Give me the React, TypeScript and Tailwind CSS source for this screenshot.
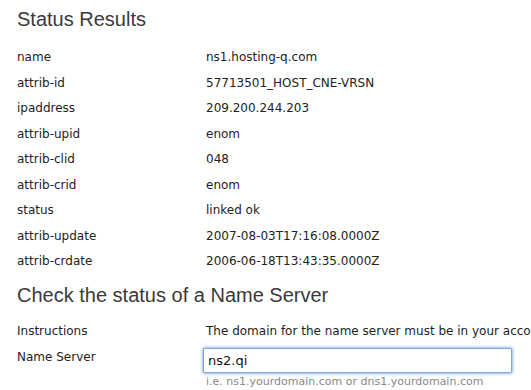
const results: [string, string][] = [
  ['name', 'ns1.hosting-q.com'],
  ['attrib-id', '57713501_HOST_CNE-VRSN'],
  ['ipaddress', '209.200.244.203'],
  ['attrib-upid', 'enom'],
  ['attrib-clid', '048'],
  ['attrib-crid', 'enom'],
  ['status', 'linked ok'],
  ['attrib-update', '2007-08-03T17:16:08.0000Z'],
  ['attrib-crdate', '2006-06-18T13:43:35.0000Z'],
];

function Row({ label, children }: { label: string; children: React.ReactNode }) {
  return (
    <div className="grid grid-cols-[189px_1fr]">
      <div className="h-[25.5px] leading-[25.5px]">{label}</div>
      <div className="min-w-0">{children}</div>
    </div>
  );
}

export default function App() {
  return (
    <div className="w-[531px] h-[390px] overflow-hidden bg-white pl-[17px] pt-[7px] font-['DejaVu_Sans',Verdana,sans-serif] text-[12px] text-[#222]">
      {/* Results */}
      <h2 className="font-['Liberation_Sans',Arial,sans-serif] text-[20px] leading-[24px] text-[#3a3a3a]">
        Status Results
      </h2>
      <div className="mt-[14px]">
        {results.map(([k, v]) => (
          <Row key={k} label={k}>
            <div className="h-[25.5px] leading-[25.5px]">{v}</div>
          </Row>
        ))}
      </div>

      {/* Check form */}
      <h2 className="mt-[8px] font-['Liberation_Sans',Arial,sans-serif] text-[20px] leading-[24px] text-[#3a3a3a]">
        Check the status of a Name Server
      </h2>
      <div className="mt-[12.5px]">
        <Row label="Instructions">
          <div className="h-[25.5px] leading-[25.5px] whitespace-nowrap">
            The domain for the name server must be in your account.
          </div>
        </Row>
        <Row label="Name Server">
          <input
            type="text"
            defaultValue="ns2.qi"
            className="mt-[3px] -ml-[3px] block h-[25px] w-[309px] rounded-[2px] border border-[#7fa6d6] bg-white px-[4px] text-[13px] text-[#111] shadow-[0_0_3px_1px_rgba(110,155,215,0.7)] outline-none"
          />
          <div className="mt-[2px] text-[11px] leading-[13px] text-[#888] whitespace-nowrap">
            i.e. ns1.yourdomain.com or dns1.yourdomain.com
          </div>
        </Row>
      </div>
    </div>
  );
}
